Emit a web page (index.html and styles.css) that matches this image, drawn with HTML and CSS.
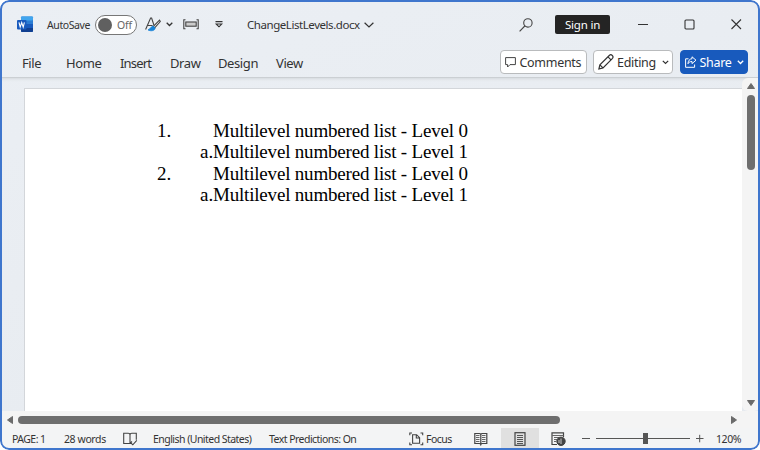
FILE: index.html
```html
<!DOCTYPE html>
<html lang="en">
<head>
<meta charset="utf-8">
<title>ChangeListLevels.docx</title>
<link rel="stylesheet" href="styles.css">
</head>
<body>
<div class="window">
  <header class="titlebar">
    <svg class="word" width="17" height="17" viewBox="0 0 17 17">
      <rect x="4" y="0.5" width="12" height="15.5" rx="1" fill="#2b7cd3"/>
      <rect x="4" y="0.5" width="12" height="4" rx="1" fill="#41a5ee"/>
      <rect x="4" y="8" width="12" height="4" fill="#185abd"/>
      <path d="M4 12h12v3a1 1 0 0 1-1 1H5a1 1 0 0 1-1-1z" fill="#103f91"/>
      <rect x="0" y="4" width="9.5" height="9.5" rx="1" fill="#185abd"/>
      <path d="M2 6.300l1.200 4.800 1.500-4.500 1.500 4.500 1.200-4.800" fill="none" stroke="#fff" stroke-width="1.1"/>
    </svg>
    <span class="autosave">AutoSave</span>
    <span class="toggle"><i class="knob"></i><span>Off</span></span>
    <svg width="17" height="17" viewBox="0 0 17 17" fill="none" stroke="#454545" stroke-width="1.1">
      <path d="M0.6 13.5L5.600 2h1l2.300 7M2.600 9.500h5"/>
      <path d="M14.500 4.200L8.200 10.500l1.400 1.400 5.700-6.400z" fill="#fff"/>
      <path d="M8 10.200c-2.200 0-2.200 2.700-5 3.700 2.700 1.600 7.500.9 7.100-2.200z" fill="#1683d8" stroke="#1683d8" stroke-width=".8"/>
    </svg>
    <svg width="7" height="5" viewBox="0 0 7 5" fill="none" stroke="#333" stroke-width="1.300"><path d="M.7.7l2.800 2.800L6.300.7"/></svg>
    <svg width="16" height="11" viewBox="0 0 16 11" fill="none" stroke="#444" stroke-width="1.100"><path d="M2.500.8H.8V3M.8 7.500v2.200h1.700M13.500.8h1.700V3M15.200 7.500v2.200h-1.700M.8 3v4.500M15.200 3v4.500"/><rect x="2.800" y="3" width="10.400" height="4.200" fill="#ccc"/></svg>
    <svg width="8" height="7" viewBox="0 0 8 7" fill="none" stroke="#333" stroke-width="1.100"><path d="M.5.600h7M1.200 3L4 5.800 6.800 3z"/></svg>
    <span class="doc-name">ChangeListLevels.docx</span>
    <svg width="10" height="6" viewBox="0 0 10 6" fill="none" stroke="#333" stroke-width="1.200"><path d="M.6.700L5 5 9.400.700"/></svg>
    <svg width="14" height="14" viewBox="0 0 14 14" fill="none" stroke="#444" stroke-width="1.100"><circle cx="8.900" cy="4.900" r="4.200"/><path d="M5.800 8L.600 13.300"/></svg>
    <button class="sign-in"><span>Sign in</span></button>
    <svg width="11" height="11" viewBox="0 0 11 11" fill="none" stroke="#333"><path d="M0 5.500h10"/></svg>
    <svg width="11" height="11" viewBox="0 0 11 11" fill="none" stroke="#333" stroke-width="1.100"><rect x="1" y="1" width="9" height="9" rx="1"/></svg>
    <svg width="11" height="11" viewBox="0 0 11 11" fill="none" stroke="#333" stroke-width="1.100"><path d="M.5.500l9.500 9.500M10 .500L.500 10"/></svg>
  </header>

  <nav class="tabs">
    <span>File</span><span>Home</span><span class="insert">Insert</span><span>Draw</span><span>Design</span><span>View</span>
    <div class="actions">
      <button class="btn comments">
        <svg width="11" height="11" viewBox="0 0 11 11" fill="none" stroke="#444"><path d="M.6.600h9.800v7H5L2.600 10V7.600H.6z"/></svg>
        <span>Comments</span>
      </button>
      <button class="btn editing">
        <svg width="16" height="16" viewBox="0 0 16 16" fill="none" stroke="#333" stroke-width="1.200"><path d="M.9 15l1-4.200L11.500 1.300c1.800-1.600 4.600 1 3 3L5 13.900zM10 2.800L13 5.800M1.900 10.800L5 13.900"/></svg>
        <span>Editing</span>
        <svg class="chev" width="7" height="5" viewBox="0 0 7 5" fill="none" stroke="#333" stroke-width="1.200"><path d="M.8.800l2.700 2.700L6.200.800"/></svg>
      </button>
      <button class="btn share">
        <svg width="12" height="12" viewBox="0 0 12 12" fill="none" stroke="#fff"><path d="M3.500 2.800H.6v8.500h9V8.500"/><path d="M7 .8l4 3.400-4 3.400V5.500c-2 0-3 .6-4 2.200.1-3 1.500-4.700 4-5z"/></svg>
        <span>Share</span>
        <svg class="chev" width="7" height="5" viewBox="0 0 7 5" fill="none" stroke="#fff" stroke-width="1.300"><path d="M.8.800l2.700 2.700L6.200.800"/></svg>
      </button>
    </div>
  </nav>

  <main class="workspace">
    <article class="page">
      <ol class="list">
        <li><span class="num">1.</span><span class="txt">Multilevel numbered list - Level 0</span></li>
        <li><span class="num sub">a.</span><span class="txt">Multilevel numbered list - Level 1</span></li>
        <li><span class="num">2.</span><span class="txt">Multilevel numbered list - Level 0</span></li>
        <li><span class="num sub">a.</span><span class="txt">Multilevel numbered list - Level 1</span></li>
      </ol>
    </article>
    <div class="vscroll">
      <svg width="10" height="8" viewBox="0 0 10 8"><path d="M5 1.500L8.500 6.500h-7z" fill="#6b6b6b" stroke="#6b6b6b" stroke-linejoin="round"/></svg>
      <i class="vthumb"></i>
      <svg class="down" width="10" height="8" viewBox="0 0 10 8"><path d="M5 6.500L8.500 1.500h-7z" fill="#6b6b6b" stroke="#6b6b6b" stroke-linejoin="round"/></svg>
    </div>
  </main>

  <div class="hscroll">
    <svg width="8" height="10" viewBox="0 0 8 10"><path d="M1.500 5L6.500 1.500v7z" fill="#6b6b6b" stroke="#6b6b6b" stroke-linejoin="round"/></svg>
    <i class="hthumb"></i>
    <svg class="right" width="8" height="10" viewBox="0 0 8 10"><path d="M6.500 5L1.500 1.500v7z" fill="#6b6b6b" stroke="#6b6b6b" stroke-linejoin="round"/></svg>
  </div>

  <footer class="status">
    <span>PAGE: 1</span>
    <span class="s-words">28 words</span>
    <svg width="15" height="14" viewBox="0 0 15 14" fill="none" stroke="#444" stroke-width="1.100"><path d="M7 11.500H.7V1.300h4.500Q7 1.300 7 3v8.500M7 3q0-1.700 1.800-1.700h4.500v6.500M7 11.500l2-2M7.500 10.500l2.300 2.300 4-4.500"/></svg>
    <span>English (United States)</span>
    <span>Text Predictions: On</span>
    <svg width="15" height="14" viewBox="0 0 15 14" fill="none" stroke="#444" stroke-width="1.100"><path d="M3 1H.8v2.200M.8 10.500v2.200H3M11.500 1h2.200v2.200M13.700 10.500v2.200h-2.200"/><path d="M3.600 2.700h4l3 3v5.600h-7zM7.300 2.700V6h3.300"/></svg>
    <span class="s-focus">Focus</span>
    <svg width="14" height="14" viewBox="0 0 14 14" fill="none" stroke="#444"><path d="M.8 1.500h4.500q1.200 0 1.500.8.3-.8 1.500-.8h4.500v10H8.300q-1.200 0-1.500 1-.3-1-1.500-1H.8zM6.800 2v10.500" stroke-width="1.200"/><path d="M2 3.500h3.500M2 5.500h3.500M2 7.500h3.500M2 9.500h3.500M8 3.500h3.500M8 5.500h3.500M8 7.500h3.500M8 9.500h3.500" stroke="#666"/></svg>
    <span class="view-on"><svg width="12" height="14" viewBox="0 0 12 14" fill="none" stroke="#444"><rect x="1" y=".7" width="10" height="12.600" stroke-width="1.200"/><path d="M3 3.500h6M3 5.500h6M3 7.500h6M3 9.500h6M3 11.500h6" stroke="#555"/></svg></span>
    <svg width="15" height="14" viewBox="0 0 15 14" fill="none" stroke="#444"><path d="M6 12.500H1V.800h11.500V5" stroke-width="1.200"/><path d="M1 3.500h11.500M3 5.500h5M3 7.500h3M3 9.500h2" stroke="#666"/><circle cx="10" cy="9.300" r="4.200" fill="#444"/><path d="M10 6.500v5.500M8 8v3" stroke="#ddd" stroke-width=".9"/></svg>
    <svg width="8" height="9" viewBox="0 0 8 9" stroke="#555"><path d="M0 4.500h8"/></svg>
    <span class="slider"><i class="handle"></i></span>
    <svg width="8" height="9" viewBox="0 0 8 9" stroke="#555"><path d="M0 4.500h7.500M3.700.800v7.500"/></svg>
    <span class="s-zoom">120%</span>
  </footer>
</div>
</body>
</html>
```
FILE: styles.css
```css
* { box-sizing: border-box; }
html { background: #fff; }
body { margin: 0; font-family: "Noto Sans", "Open Sans", sans-serif; color: #333; }
svg, i { display: block; }
span { white-space: nowrap; }
button { border: 0; margin: 0; padding: 0; font: inherit; }

.window {
  position: relative;
  width: 760px;
  height: 450px;
  border-radius: 9px;
  overflow: hidden;
  display: flex;
  flex-direction: column;
  background: linear-gradient(160deg, #ebeff4, #e6eaef);
}
.window::after {
  content: "";
  position: absolute;
  inset: 0;
  border: 2px solid #3f76cd;
  border-radius: 9px;
  pointer-events: none;
}

.titlebar {
  height: 49px;
  padding-left: 17px;
  display: grid;
  grid-template-columns: 30px 48px 50px 21px 17px 32px 32px 117px 155px 36px 83px 46px 47px 20px;
  align-items: center;
}
.autosave { font-size: 10.500px; letter-spacing: -.4px; }
.toggle {
  width: 42px;
  height: 20px;
  border: 1px solid #777;
  border-radius: 10px;
  background: #fff;
  display: flex;
  align-items: center;
  gap: 5px;
  padding-left: 2px;
  font-size: 10.500px;
  letter-spacing: -.2px;
  color: #666;
}
.knob { width: 14px; height: 14px; border-radius: 50%; background: #606060; }
.doc-name { font-size: 11.500px; letter-spacing: -.44px; }
.sign-in {
  width: 55px;
  height: 19px;
  border-radius: 2px;
  background: #242424;
  color: #fff;
  font-size: 11.500px;
  letter-spacing: -.2px;
  line-height: 19px;
}

.tabs {
  height: 29px;
  padding-left: 22px;
  display: grid;
  grid-template-columns: 44px 54px 50px 48px 58px 223.500px 260px;
  align-items: center;
  font-size: 13px;
  border-bottom: 1px solid #cbcfd3;
  letter-spacing: -.4px;
}
.insert { letter-spacing: -.8px; }
.actions { display: flex; gap: 6.500px; margin-top: -2px; }
.btn {
  height: 24px;
  border: 1px solid #b9bbbd;
  border-radius: 4px;
  background: #fff;
  color: #333;
  display: flex;
  align-items: center;
  font-size: 12.500px;
  letter-spacing: -.3px;
}
.btn .chev { margin-left: auto; }
.comments { width: 87px; padding-left: 4px; gap: 4px; }
.editing { width: 80px; padding: 0 3px 0 4px; gap: 3px; }
.share { width: 68px; padding: 0 3px 0 4px; gap: 3px; background: #185abd; border-color: #185abd; color: #fff; }

.workspace {
  height: 333px;
  padding: 10px 0 0 24px;
  display: flex;
  box-shadow: inset 0 3px 3px -2px #d4d8dc;
}
.page {
  width: 718px;
  background: #fff;
  border-top: 1px solid #d3d6da;
  border-left: 1px solid #d3d6da;
  padding: 31px 0 0 132px;
}
.list {
  list-style: none;
  margin: 0;
  padding: 0;
  font-family: "Liberation Serif", serif;
  font-size: 19px;
  line-height: 21.400px;
  color: #000;
}
.list li { display: grid; grid-template-columns: 56px auto; height: 21.400px; }
.txt { letter-spacing: -.19px; }
.num.sub { padding-left: 43px; }

.vscroll {
  width: 18px;
  margin-top: -10px;
  border-radius: 6px 0 6px 6px;
  background: #f4f4f4;
  display: flex;
  flex-direction: column;
  align-items: center;
  padding: 4px 1px 4px 0;
}
.vthumb { width: 8px; height: 75px; margin-top: 5px; border-radius: 4px; background: #6e6e6e; }
.vscroll .down { margin-top: auto; }

.hscroll {
  height: 17px;
  padding: 0 22px 0 6px;
  background: #f4f4f4;
  display: flex;
  align-items: center;
}
.hthumb { width: 542px; height: 8px; margin-left: 4px; border-radius: 4px; background: #6e6e6e; }
.hscroll .right { margin-left: auto; }

.status {
  height: 22px;
  padding: 0 0 1px 12px;
  background: #f3f4f5;
  display: grid;
  grid-template-columns: 52px 59px 30px 116px 140px 17px 48px 27px 50px 31px 14px 100px 20px 32px;
  align-items: center;
  font-size: 10.500px;
  letter-spacing: -.54px;
}
.s-words, .s-zoom { letter-spacing: -.4px; }
.s-focus { letter-spacing: -.5px; }
.view-on { width: 38px; height: 21px; background: #e0e0e0; display: grid; place-items: center; }
.slider { width: 94px; height: 11px; background: linear-gradient(#555, #555) center / 100% 1px no-repeat; }
.handle { width: 5px; height: 11px; margin-left: 47px; background: #555; }
```
